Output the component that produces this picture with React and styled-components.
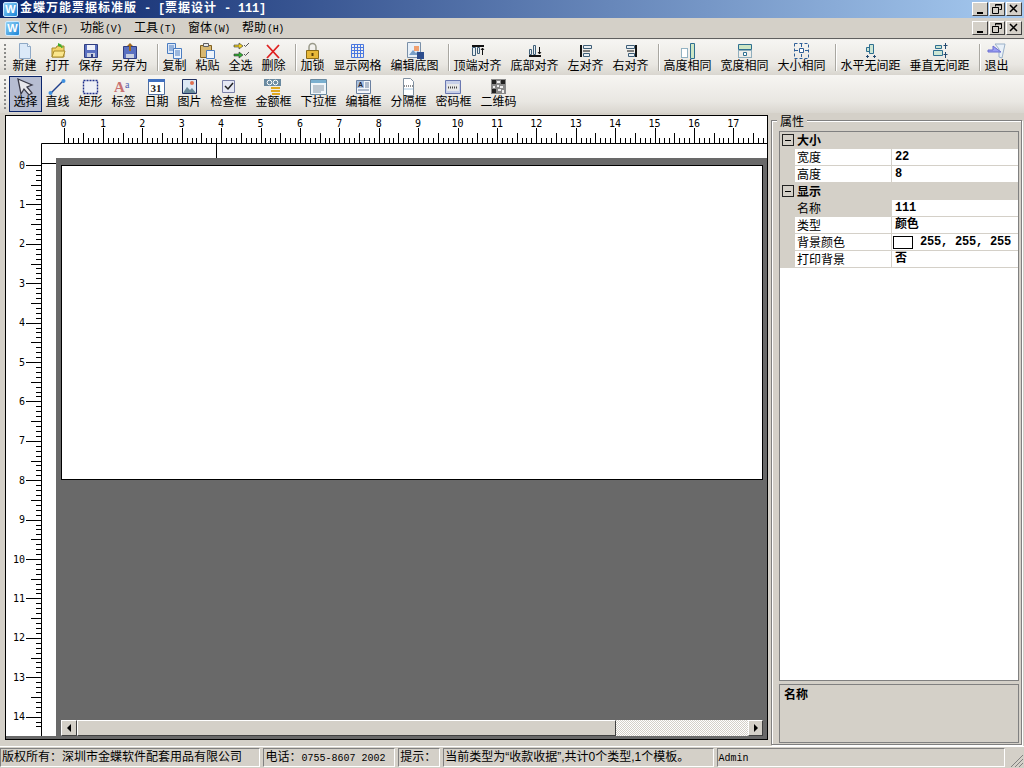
import React from 'react'
import styled, { createGlobalStyle } from 'styled-components'

const colors = {
  face: '#d4d0c8',
  shadow: '#808080',
  gray: '#696969',
  navy: '#0a246a',
}

const cjk = '"Noto Sans CJK SC", "Liberation Sans", sans-serif'
const mono = '"Liberation Mono", "Noto Sans CJK SC", monospace'

const GlobalStyle = createGlobalStyle`
  html, body { margin: 0; padding: 0; background: ${colors.face}; }
  * { box-sizing: border-box; }
`

const Window = styled.div`
  width: 1024px;
  height: 768px;
  overflow: hidden;
  display: flex;
  flex-direction: column;
  background: ${colors.face};
  font: 12px/14px ${cjk};
  color: #000;
`

const TitleBar = styled.div`
  height: 18px;
  display: flex;
  align-items: center;
  padding: 0 2px 0 3px;
  background: linear-gradient(90deg, #0a246a, #a6caf0);
`

const TitleText = styled.div`
  margin-left: 2px;
  flex: 1;
  color: #fff;
  font: bold 12px/16px ${mono};
  letter-spacing: -0.2px;
  white-space: pre;
`

const TitleWide = styled.span`
  letter-spacing: 1px;
`

const AppLogo = styled.span`
  width: 15px;
  height: 15px;
  display: flex;
  align-items: center;
  justify-content: center;
  border-radius: 2px;
  background: linear-gradient(135deg, #8fd0f5, #1c86d8);
  border: 1px solid #cfeaff;
  color: #fff;
  font: bold 11px/13px "Liberation Sans", sans-serif;
`

const WinButtons = styled.div`
  display: flex;
  gap: 1px;
`

const WinButton = styled.div`
  width: 16px;
  height: 14px;
  display: flex;
  align-items: center;
  justify-content: center;
  background: ${colors.face};
  border: 1px solid;
  border-color: #fff #404040 #404040 #fff;
`

const MenuBar = styled.div`
  height: 20px;
  display: flex;
  align-items: center;
  padding: 0 2px 0 5px;
`

const MenuItems = styled.div`
  flex: 1;
  display: flex;
  margin-left: 6px;
`

const MenuItem = styled.div`
  width: 54px;
  white-space: nowrap;
`

const Mnemonic = styled.span`
  font: 10px/14px "Liberation Mono", monospace;
  letter-spacing: -0.4px;
  margin-left: 1px;
`

const Bars = styled.div`
  border-top: 1px solid #5f5f5f;
  padding-top: 1px;
  background: #f1f0ec;
`

const Toolbar = styled.div`
  height: ${({ $height }) => $height}px;
  display: flex;
  align-items: stretch;
  padding-left: 8px;
  position: relative;
  background: linear-gradient(180deg, #f6f5f2 0%, #e9e7e2 70%, #d9d6cf 100%);
  &::before {
    content: '';
    position: absolute;
    left: 4px;
    top: 4px;
    bottom: 4px;
    width: 2px;
    background: repeating-linear-gradient(180deg, #8a8a88 0 2px, transparent 2px 4px);
  }
`

const ToolButton = styled.div`
  width: ${({ $chars }) => $chars * 12 + 9}px;
  display: flex;
  flex-direction: column;
  align-items: center;
  padding-top: ${({ $top }) => $top}px;
  ${({ $active }) => $active && `
    background: #b6bdd2;
    border: 1px solid ${colors.navy};
    margin: 1px -1px 1px 1px;
    padding-top: 1px;
  `}
`

const ToolLabel = styled.span`
  margin-top: -1px;
  line-height: 12px;
  white-space: nowrap;
`

const ToolSep = styled.div`
  width: 1px;
  margin: 4px 0 4px 5px;
  background: #a9a7a1;
  box-shadow: 1px 0 0 #fff;
`

const Main = styled.div`
  height: 632px;
  margin-top: 2px;
  display: flex;
  align-items: flex-start;
  border-bottom: 1px solid #fff;
`

const Canvas = styled.div`
  width: 763px;
  height: 625px;
  margin-left: 5px;
  border: 1px solid #000;
  display: grid;
  grid-template-columns: 50px 711px;
  grid-template-rows: 42px 581px;
  background: ${colors.gray};
`

const TopRuler = styled.svg`
  grid-column: 1 / 3;
  display: block;
  background: #fff;
`

const LeftRuler = styled.svg`
  display: block;
  background: #fff;
`

const Workspace = styled.div`
  display: flex;
  flex-direction: column;
  padding: 7px 4px 3px 5px;
`

const Page = styled.div`
  height: 315px;
  background: #fff;
  border: 1px solid #000;
`

const ScrollBar = styled.div`
  margin-top: auto;
  height: 16px;
  display: flex;
  background: repeating-conic-gradient(#d4d0c8 0 25%, #fff 0 50%) 0 0 / 2px 2px;
`

const ScrollButton = styled.div`
  width: ${({ $width }) => $width}px;
  ${({ $end }) => $end && 'margin-left: auto;'}
  display: flex;
  align-items: center;
  justify-content: center;
  background: ${colors.face};
  border: 1px solid;
  border-color: #fff #404040 #404040 #fff;
`

const Arrow = styled.span`
  width: 0;
  height: 0;
  border-top: 4px solid transparent;
  border-bottom: 4px solid transparent;
  ${({ $dir }) => ($dir === 'left' ? 'border-right: 4px solid #000;' : 'border-left: 4px solid #000;')}
`

const PropsGroup = styled.div`
  position: relative;
  width: 251px;
  height: 625px;
  margin: 5px 0 0 3px;
  padding: 10px 2px 1px 7px;
  display: flex;
  flex-direction: column;
  gap: 3px;
  border: 1px solid ${colors.shadow};
  box-shadow: inset 1px 1px 0 #fff, 1px 1px 0 #fff;
`

const GroupLabel = styled.span`
  position: absolute;
  left: 5px;
  top: -7px;
  padding: 0 3px;
  background: ${colors.face};
`

const Grid = styled.div`
  flex: 1;
  background: #fff;
  border: 1px solid ${colors.shadow};
`

const Row = styled.div`
  height: 17px;
  display: flex;
  background: ${colors.face};
  border-bottom: 1px solid ${colors.face};
`

const Expander = styled.span`
  width: 15px;
  display: flex;
  align-items: center;
  justify-content: center;
  &::after {
    content: '';
    width: 10px;
    height: 10px;
    background: linear-gradient(#000, #000) center / 6px 1px no-repeat;
    border: 1px solid #222;
  }
`

const GroupName = styled.span`
  margin-left: 2px;
  font-weight: bold;
  line-height: 16px;
`

const PropName = styled.span`
  width: 97px;
  margin-left: 15px;
  padding-left: 2px;
  background: ${({ $shaded }) => ($shaded ? colors.face : '#fff')};
  border-right: 1px solid ${colors.face};
  line-height: 16px;
`

const PropValue = styled.span`
  flex: 1;
  display: flex;
  align-items: center;
  padding-left: 3px;
  background: #fff;
  font: bold 12px/16px ${mono};
  letter-spacing: -0.2px;
  white-space: pre;
`

const Swatch = styled.span`
  width: 20px;
  height: 13px;
  margin: 0 7px 0 -2px;
  background: #fff;
  border: 1px solid #000;
`

const Description = styled.div`
  height: 59px;
  padding: 2px 4px;
  border: 1px solid ${colors.shadow};
  font-weight: bold;
`

const StatusBar = styled.div`
  height: 19px;
  margin-top: 1px;
  display: flex;
  gap: 3px;
`

const StatusCell = styled.div`
  width: ${({ $width }) => $width}px;
  padding-left: 1px;
  border: 1px solid;
  border-color: ${colors.shadow} #fff #fff ${colors.shadow};
  font-family: "Liberation Sans", "Noto Sans CJK SC", sans-serif;
  line-height: 17px;
  white-space: nowrap;
  overflow: hidden;
`

const Digits = styled.span`
  font: 10px/17px "Liberation Mono", monospace;
`

const Grip = styled.svg`
  display: block;
  margin: 5px 0 0 -1px;
`

const icons = {
  new: <><path d="M5.5 1.5h8l3 3v12h-11z" fill="#dbe9f8" stroke="#8fa9c6" /><path d="M13.5 1.5v3h3" fill="#fff" stroke="#8fa9c6" /></>,
  open: <><path d="M5 6h4l1-2h7v11H5z" fill="#f3d268" stroke="#a88a2a" /><path d="M5 15l2-6h11l-2 6z" fill="#fbe68c" stroke="#a88a2a" /><path d="M11 1l4 2-1 1 3 1-3 1v-1l-3-1z" fill="#3cab2c" /></>,
  save: <><path d="M4.5 2.500h13v13h-13z" fill="#5a70c0" stroke="#2f3d80" /><path d="M7 3h8v5H7z" fill="#eef1fa" /><path d="M7 11h8v4H7z" fill="#c9cfe0" /><path d="M11 12h2v3h-2z" fill="#2f3d80" /></>,
  saveas: <><path d="M4.5 4.500h13v12h-13z" fill="#5a70c0" stroke="#2f3d80" /><path d="M7 12h8v4H7z" fill="#c9cfe0" /><path d="M11 1l3 3h-2v5h-2V4H8z" fill="#a06a20" /></>,
  copy: <><path d="M3.500 1.500h8v10h-8z" fill="#dce8f8" stroke="#4a7cc0" /><path d="M5 4h5M5 6h5M5 8h5" stroke="#4a7cc0" /><path d="M9.500 6.500h8v10h-8z" fill="#eef4fc" stroke="#4a7cc0" /><path d="M11 9h5M11 11h5M11 13h5" stroke="#4a7cc0" /></>,
  paste: <><path d="M3.500 3.500h11v12h-11z" fill="#d8b870" stroke="#806020" /><path d="M6.500 1.500h5v3h-5z" fill="#e8e8e8" stroke="#606060" /><path d="M9.500 8.500h8v8h-8z" fill="#eef4fc" stroke="#4a7cc0" /></>,
  selectall: <><path d="M4 3h5V1l4 3-4 3V5H4z" fill="#f0d020" stroke="#333" strokeWidth=".6" /><path d="M4 12h5v-2l4 3-4 3v-2H4z" fill="#30b030" stroke="#333" strokeWidth=".6" /><path d="M14 3l1.500 1.500L19 1M14 12l1.500 1.500L19 10" fill="none" stroke="#555" /></>,
  del: <path d="M4 3l12 13M16 3L4 16" stroke="#e02020" strokeWidth="1.800" fill="none" />,
  lock: <><path d="M7 8V5a3.500 3.500 0 0 1 7 0v3" fill="none" stroke="#9a9a8a" strokeWidth="1.500" /><path d="M4.500 8.500h12v8h-12z" fill="#e8b838" stroke="#8a6a18" /><path d="M9.500 11h2v3h-2z" fill="#5a4008" /></>,
  grid: <path d="M4.500 2.500h12v13h-12zM4 5.500h13M4 8.500h13M4 11.500h13M7.500 2v14M10.500 2v14M13.500 2v14" fill="none" stroke="#4a78e0" />,
  editbg: <><path d="M3.500 0.500h13v15h-13z" fill="#e8f0f8" stroke="#7a90a8" /><path d="M5 13l4-5 3 3 2-2 2 4z" fill="#7aa0c8" /><path d="M10 4h5v5h-5z" fill="#f0a070" /><path d="M13 10h7v7h-7z" fill="#2c4c8c" /></>,
  top: <><path d="M5 4h12" stroke="#111" strokeWidth="2" /><path d="M5.500 5.500h3v8h-3zM10.500 5.500h2v6h-2z" fill="#e8eef2" stroke="#3f5f78" /><path d="M15.500 6v7M14 8l1.500-2 1.500 2" stroke="#111" fill="none" /></>,
  bottom: <><path d="M5 14h12" stroke="#111" strokeWidth="2" /><path d="M5.500 7.500h2v5h-2zM9.500 3.500h2v9h-2z" fill="#e8eef2" stroke="#3f5f78" /><path d="M15.500 5v7M14 10l1.500 2 1.500-2" stroke="#111" fill="none" /></>,
  left: <><path d="M6 3v12" stroke="#111" strokeWidth="2" /><path d="M8.500 3.500h8v3h-8zM8.500 11.500h6v3h-6z" fill="#e8eef2" stroke="#3f5f78" /><path d="M8 9h7" stroke="#111" /></>,
  right: <><path d="M16 3v12" stroke="#111" strokeWidth="2" /><path d="M6.500 3.500h8v3h-8zM8.500 11.500h6v3h-6z" fill="#e8eef2" stroke="#3f5f78" /><path d="M7 9h7" stroke="#111" /></>,
  sameh: <><path d="M13.500 1.500h4v15h-4z" fill="#cde6c4" stroke="#2f6f90" /><path d="M4.500 6.500h6v9h-6z" fill="#fff" stroke="#2f6f90" strokeDasharray="1 1" /></>,
  samew: <><path d="M4.500 2.500h13v5h-13z" fill="#cde6c4" stroke="#2f6f90" /><path d="M4.500 8.500h13v7h-13z" fill="none" stroke="#2f6f90" strokeDasharray="1 1" /><path d="M9.500 10.500h3v3h-3z" fill="#fff" stroke="#2f6f90" /></>,
  samesize: <><path d="M3.500 1.500h14v15h-14z" fill="none" stroke="#2f5f98" strokeDasharray="3 2" /><path d="M8.500 6.500h4v4h-4z" fill="#fff" stroke="#2f5f98" /><path d="M10.500 2v3M10.500 12v3M4 8.500h3M14 8.500h3" stroke="#2f5f98" /></>,
  hspace: <><path d="M9.500 2.500h4v9h-4zM6.500 5.500h3v4h-3z" fill="#cde6d4" stroke="#2f6f90" /><path d="M6 14.500h3M13 14.500h3M7.500 13v3M14.500 13v3" stroke="#244a70" /></>,
  vspace: <><path d="M6.500 3.500h6v3h-6zM4.500 8.500h9v5h-9z" fill="#cde6d4" stroke="#2f6f90" /><path d="M16.500 1v6M16.500 10v6M14.500 3.500h4M14.500 12.500h4" stroke="#244a70" /></>,
  exit: <><path d="M9 2h10l-3 14-3-1V7z" fill="#e8f0f8" stroke="#9ab0c8" /><path d="M2 8h5V4l8 6H2z" fill="#9a9ef4" stroke="#6a6ed0" /></>,
  select: <path d="M3 1l14 6-5 2 5 6-3 2-5-6-3 5z" fill="#e8e8ec" stroke="#3a3a48" strokeWidth="1.300" />,
  line: <><path d="M4 15L16 3" stroke="#20408c" strokeWidth="1.500" /><circle cx="3.500" cy="15" r="2" fill="#3f90e0" /><circle cx="16.500" cy="3" r="2" fill="#3f90e0" /></>,
  rect: <path d="M3.500 2.500h14v13h-14z" fill="#eef0f6" stroke="#20308c" strokeWidth="1.400" strokeDasharray="2 1" />,
  label: <><text x="1" y="13.500" fontFamily="Liberation Serif" fontSize="15" fontWeight="bold" fill="#c87070">A</text><text x="12" y="10" fontFamily="Liberation Serif" fontSize="10" fill="#5060b0">a</text></>,
  date: <><path d="M2.500 1.500h16v15h-16z" fill="#fff" stroke="#5070a0" /><path d="M2 1h17v3H2z" fill="#3f70c0" /><text x="4.500" y="14" fontFamily="Liberation Serif" fontSize="11" fontWeight="bold" fill="#222">31</text></>,
  image: <><path d="M3.500 1.500h14v14h-14z" fill="#dce8f4" stroke="#203060" /><path d="M4 15l4-6 3 3 2-2 4 5z" fill="#6a8a9a" /><circle cx="13" cy="5" r="2" fill="#e07050" /></>,
  check: <><path d="M4.500 2.500h12v12h-12z" fill="#e6e8f4" stroke="#7a80a8" /><path d="M7 8l3 3 5-6" fill="none" stroke="#222" strokeWidth="1.500" /></>,
  money: <><path d="M1 1h17v7H1z" fill="#6a8aa0" /><circle cx="6.500" cy="4.500" r="2.300" fill="none" stroke="#fff" /><circle cx="12.500" cy="4.500" r="2.300" fill="none" stroke="#fff" /><path d="M8 9h9v2H8zM8 12h9v2H8zM9 15h8v2H9z" fill="#e0a820" /></>,
  combo: <><path d="M2.500 1.500h16v15h-16z" fill="#f0f6fa" stroke="#6a8aa0" /><path d="M3 2h15v3H3z" fill="#7ab0d0" /><path d="M5 8h11M5 10h11M5 12h11M5 14h8" stroke="#8a9aa8" /></>,
  edit: <><path d="M3.500 2.500h14v13h-14z" fill="#f4f6fa" stroke="#6a80a0" /><path d="M4 3h7v7H4z" fill="#a8c0e0" /><text x="5" y="9" fontFamily="Liberation Sans" fontSize="7" fontWeight="bold" fill="#223">A</text><path d="M12 5h4M12 7h4M12 9h4M5 12h11" stroke="#6a80a0" /></>,
  divider: <><path d="M5.500 0.500h7l3 3v14h-10z" fill="#fff" stroke="#8090a0" /><path d="M6 8h9" stroke="#222" strokeDasharray="1 1" /><path d="M6 11h9" stroke="#a8c8e0" /></>,
  password: <><path d="M2.500 2.500h15v13h-15z" fill="#c8d0e8" stroke="#6a78b0" /><path d="M4 6h12v7H4z" fill="#e8e8e8" /><path d="M5 9.500h10" stroke="#444" strokeWidth="2" strokeDasharray="1 1" /></>,
  qr: <><path d="M3 1h15v15H3z" fill="#888" /><path d="M4 2h4v4H4zM13 2h4v4h-4zM4 11h4v4H4z" fill="#222" /><path d="M9 3h3v2H9zM9 7h2v2H9zM12 8h3v2h-3zM5 8h2v2H5zM10 11h3v2h-3zM14 12h2v3h-2z" fill="#eee" /></>,
}

const topTools = [
  ['新建', 'new'], ['打开', 'open'], ['保存', 'save'], ['另存为', 'saveas'], null,
  ['复制', 'copy'], ['粘贴', 'paste'], ['全选', 'selectall'], ['删除', 'del'], null,
  ['加锁', 'lock'], ['显示网格', 'grid'], ['编辑底图', 'editbg'], null,
  ['顶端对齐', 'top'], ['底部对齐', 'bottom'], ['左对齐', 'left'], ['右对齐', 'right'], null,
  ['高度相同', 'sameh'], ['宽度相同', 'samew'], ['大小相同', 'samesize'], null,
  ['水平无间距', 'hspace'], ['垂直无间距', 'vspace'], null,
  ['退出', 'exit'],
]

const bottomTools = [
  ['选择', 'select', true], ['直线', 'line'], ['矩形', 'rect'], ['标签', 'label'], ['日期', 'date'],
  ['图片', 'image'], ['检查框', 'check'], ['金额框', 'money'], ['下拉框', 'combo'], ['编辑框', 'edit'],
  ['分隔框', 'divider'], ['密码框', 'password'], ['二维码', 'qr'],
]

const menus = [['文件', 'F'], ['功能', 'V'], ['工具', 'T'], ['窗体', 'W'], ['帮助', 'H']]

const UNIT = 39.4

const tickLength = (i) => (i % 8 === 0 ? 15 : i % 4 === 0 ? 10 : 5)

const HorizontalRuler = () => {
  const ticks = []
  for (let i = 0; i < 8 * 18 + 3; i++) {
    const x = Math.round(57.5 + (i * UNIT) / 8) + 0.5
    ticks.push(`M${x} 27v-${tickLength(i)}`)
  }
  const labels = Array.from({ length: 18 }, (_, n) => n)
  return (
    <TopRuler width="761" height="42">
      <path d={ticks.join('')} stroke="#000" fill="none" />
      <path d="M35.500 42V27.500H761M210.500 27v15" stroke="#000" fill="none" />
      {labels.map((n) => (
        <text key={n} x={57.5 + n * UNIT} y="10.500" textAnchor="middle" fontFamily="DejaVu Sans Mono" fontSize="10">{n}</text>
      ))}
    </TopRuler>
  )
}

const VerticalRuler = () => {
  const ticks = []
  for (let i = 0; i < 8 * 14 + 3; i++) {
    const y = Math.round(7 + (i * UNIT) / 8) + 0.5
    ticks.push(`M35 ${y}h-${tickLength(i)}`)
  }
  const labels = Array.from({ length: 15 }, (_, n) => n)
  return (
    <LeftRuler width="50" height="578">
      <path d={ticks.join('')} stroke="#000" fill="none" />
      <path d="M35.500 0V578M35 5.500h15" stroke="#000" fill="none" />
      {labels.map((n) => (
        <text key={n} x="19" y={10.5 + n * UNIT} textAnchor="end" fontFamily="DejaVu Sans Mono" fontSize="10">{n}</text>
      ))}
    </LeftRuler>
  )
}

const Tool = ({ label, icon, active, top }) => (
  <ToolButton $chars={label.length} $active={active} $top={top}>
    <svg width="21" height="18" viewBox="0 0 21 18">{icons[icon]}</svg>
    <ToolLabel>{label}</ToolLabel>
  </ToolButton>
)

const WindowControls = () => (
  <WinButtons>
    <WinButton>
      <svg width="10" height="10"><path d="M2 8h6v2H2z" /></svg>
    </WinButton>
    <WinButton>
      <svg width="10" height="10"><path d="M3.500 2.500V.5h6v5h-2M.5 3.500h6v6h-6z M.5 3.500h6M3.500 1h6" fill="none" stroke="#000" /></svg>
    </WinButton>
    <WinButton>
      <svg width="10" height="10"><path d="M1 1l7 7M8 1L1 8" stroke="#000" strokeWidth="1.500" /></svg>
    </WinButton>
  </WinButtons>
)

const PropRow = ({ name, shaded, children }) => (
  <Row>
    <PropName $shaded={shaded}>{name}</PropName>
    <PropValue>{children}</PropValue>
  </Row>
)

const GroupRow = ({ name }) => (
  <Row>
    <Expander />
    <GroupName>{name}</GroupName>
  </Row>
)

const App = () => (
  <Window>
    <GlobalStyle />
    <TitleBar>
      <AppLogo>W</AppLogo>
      <TitleText><TitleWide>金蝶万能票据标准版</TitleWide> - [<TitleWide>票据设计</TitleWide> - 111]</TitleText>
      <WindowControls />
    </TitleBar>
    <MenuBar>
      <AppLogo>W</AppLogo>
      <MenuItems>
        {menus.map(([name, key]) => (
          <MenuItem key={key}>{name}<Mnemonic>({key})</Mnemonic></MenuItem>
        ))}
      </MenuItems>
      <WindowControls />
    </MenuBar>
    <Bars>
      <Toolbar $height={35}>
        {topTools.map((tool, i) =>
          tool ? <Tool key={i} label={tool[0]} icon={tool[1]} top={2} /> : <ToolSep key={i} />
        )}
      </Toolbar>
      <Toolbar $height={38}>
        {bottomTools.map(([label, icon, active]) => (
          <Tool key={label} label={label} icon={icon} active={active} top={3} />
        ))}
      </Toolbar>
    </Bars>
    <Main>
      <Canvas>
        <HorizontalRuler />
        <VerticalRuler />
        <Workspace>
          <Page />
          <ScrollBar>
            <ScrollButton $width={16}><Arrow $dir="left" /></ScrollButton>
            <ScrollButton $width={539} />
            <ScrollButton $width={15} $end><Arrow $dir="right" /></ScrollButton>
          </ScrollBar>
        </Workspace>
      </Canvas>
      <PropsGroup>
        <GroupLabel>属性</GroupLabel>
        <Grid>
          <GroupRow name="大小" />
          <PropRow name="宽度">22</PropRow>
          <PropRow name="高度">8</PropRow>
          <GroupRow name="显示" />
          <PropRow name="名称" shaded>111</PropRow>
          <PropRow name="类型">颜色</PropRow>
          <PropRow name="背景颜色"><Swatch />255, 255, 255</PropRow>
          <PropRow name="打印背景">否</PropRow>
        </Grid>
        <Description>名称</Description>
      </PropsGroup>
    </Main>
    <StatusBar>
      <StatusCell $width={261}>版权所有：深圳市金蝶软件配套用品有限公司</StatusCell>
      <StatusCell $width={132}>电话：<Digits>0755-8607 2002</Digits></StatusCell>
      <StatusCell $width={42}>提示：</StatusCell>
      <StatusCell $width={271}>当前类型为“收款收据”,共计0个类型,1个模板。</StatusCell>
      <StatusCell $width={289}><Digits>Admin</Digits></StatusCell>
      <Grip width="17" height="14"><path d="M4 14L16 2M8 14l8-8M12 14l4-4" stroke="#808080" fill="none" /></Grip>
    </StatusBar>
  </Window>
)

export default App
